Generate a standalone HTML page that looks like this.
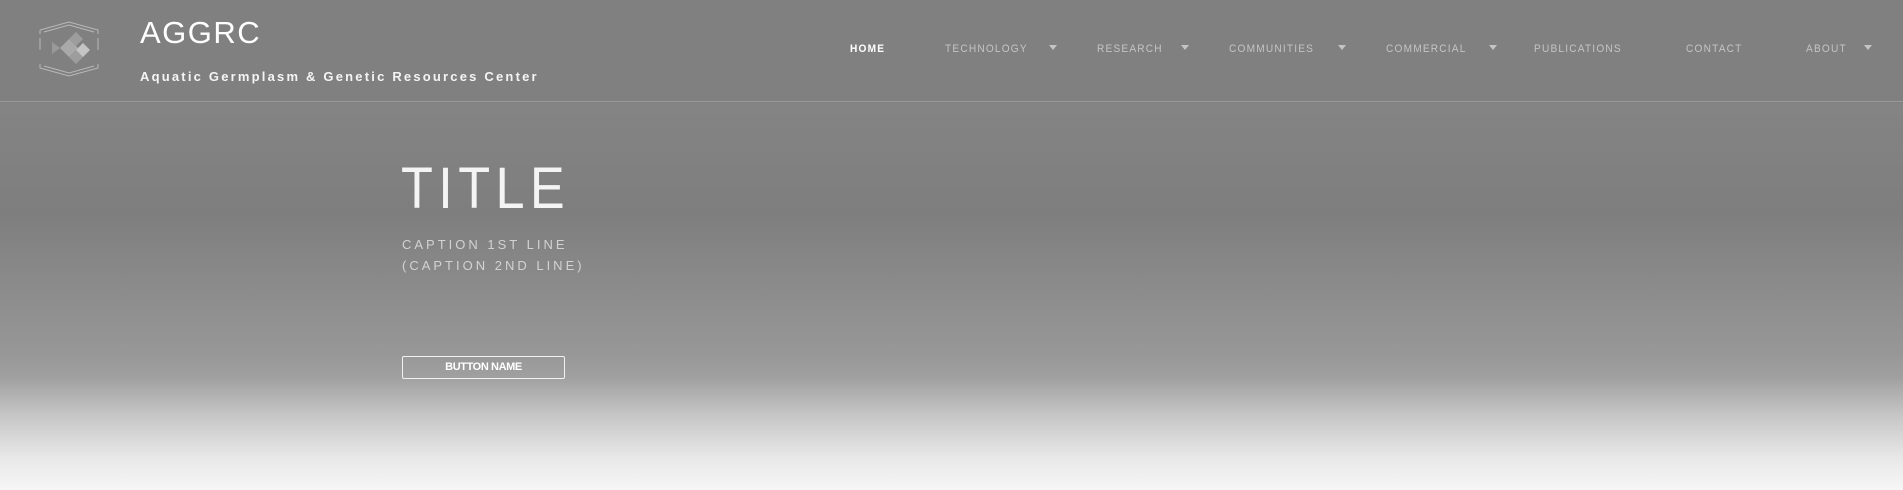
<!DOCTYPE html>
<html><head><meta charset="utf-8"><style>
*{margin:0;padding:0;box-sizing:border-box}
body{width:1903px;height:490px;overflow:hidden;font-family:"Liberation Sans",sans-serif;background:#808080;position:relative}
.hdr{position:absolute;left:0;top:0;width:1903px;height:102px;background:#808080;border-bottom:1px solid #9a9a9a}
.hero{position:absolute;left:0;top:103px;width:1903px;height:387px;background:linear-gradient(#848484 0px,#7e7e7e 110px,#8e8e8e 200px,#979797 250px,#a0a0a0 275px,#c8c8c8 315px,#e8e8e8 355px,#f6f6f6 387px)}
.t{position:absolute;white-space:nowrap}
.nav{position:absolute;top:43px;font-size:11px;letter-spacing:1.3px;color:#c4c4c4;transform:scaleX(.92);transform-origin:left}
.arr{position:absolute;top:45px;width:0;height:0;border-left:4px solid transparent;border-right:4px solid transparent;border-top:5px solid #c4c4c4}
</style></head><body>
<div class="hdr">
<svg style="position:absolute;left:36px;top:20px" width="66" height="58" viewBox="0 0 66 58" fill="none" stroke="#b8b8b8" stroke-width="1">
<path d="M4 10 L33 2 L62 10 L62 14 M4 10 L4 14 M8 12 L33 5 L58 12"/>
<path d="M4 18 L4 30 M62 18 L62 30"/>
<path d="M4 44 L4 48 L33 56 L62 48 L62 44 M8 46 L33 53 L58 46"/>
<g fill="#a9a9a9" stroke="none"><path d="M24 28 L33 19 L42 28 L33 37Z"/><path d="M33 19 L40 12 L47 19 L40 26Z" fill="#9d9d9d"/><path d="M33 37 L40 30 L47 37 L40 44Z" fill="#9d9d9d"/><path d="M40 30 L47 23 L54 30 L47 37Z" fill="#c4c4c4"/><path d="M16 22 L24 28 L16 34Z" fill="#999"/></g>
</svg>
<div class="t" style="left:140px;top:15px;font-size:31px;letter-spacing:1.5px;color:#fff">AGGRC</div>
<div class="t" style="left:140px;top:69px;font-size:13px;font-weight:bold;letter-spacing:2.2px;color:#f4f4f4">Aquatic Germplasm &amp; Genetic Resources Center</div>
<div class="t nav" style="left:850px;color:#fff;font-weight:bold">HOME</div>
<div class="t nav" style="left:945px">TECHNOLOGY</div><div class="arr" style="left:1049px"></div>
<div class="t nav" style="left:1097px">RESEARCH</div><div class="arr" style="left:1181px"></div>
<div class="t nav" style="left:1229px">COMMUNITIES</div><div class="arr" style="left:1338px"></div>
<div class="t nav" style="left:1386px">COMMERCIAL</div><div class="arr" style="left:1489px"></div>
<div class="t nav" style="left:1534px">PUBLICATIONS</div>
<div class="t nav" style="left:1686px">CONTACT</div>
<div class="t nav" style="left:1806px">ABOUT</div><div class="arr" style="left:1864px"></div>
</div>
<div class="hero">
<div class="t" style="left:401px;top:52px;font-size:58px;font-weight:normal;letter-spacing:6px;color:#f4f4f4;transform:scaleX(.9);transform-origin:left">TITLE</div>
<div class="t" style="left:402px;top:131px;font-size:13px;letter-spacing:3px;color:#d2d2d2;line-height:21px">CAPTION 1ST LINE<br>(CAPTION 2ND LINE)</div>
<div style="position:absolute;left:402px;top:253px;width:163px;height:23px;border:1px solid #f2f2f2;border-radius:2px;color:#fff;font-size:11px;font-weight:bold;text-align:center;line-height:21px;letter-spacing:-.4px">BUTTON NAME</div>
</div>
</body></html>
